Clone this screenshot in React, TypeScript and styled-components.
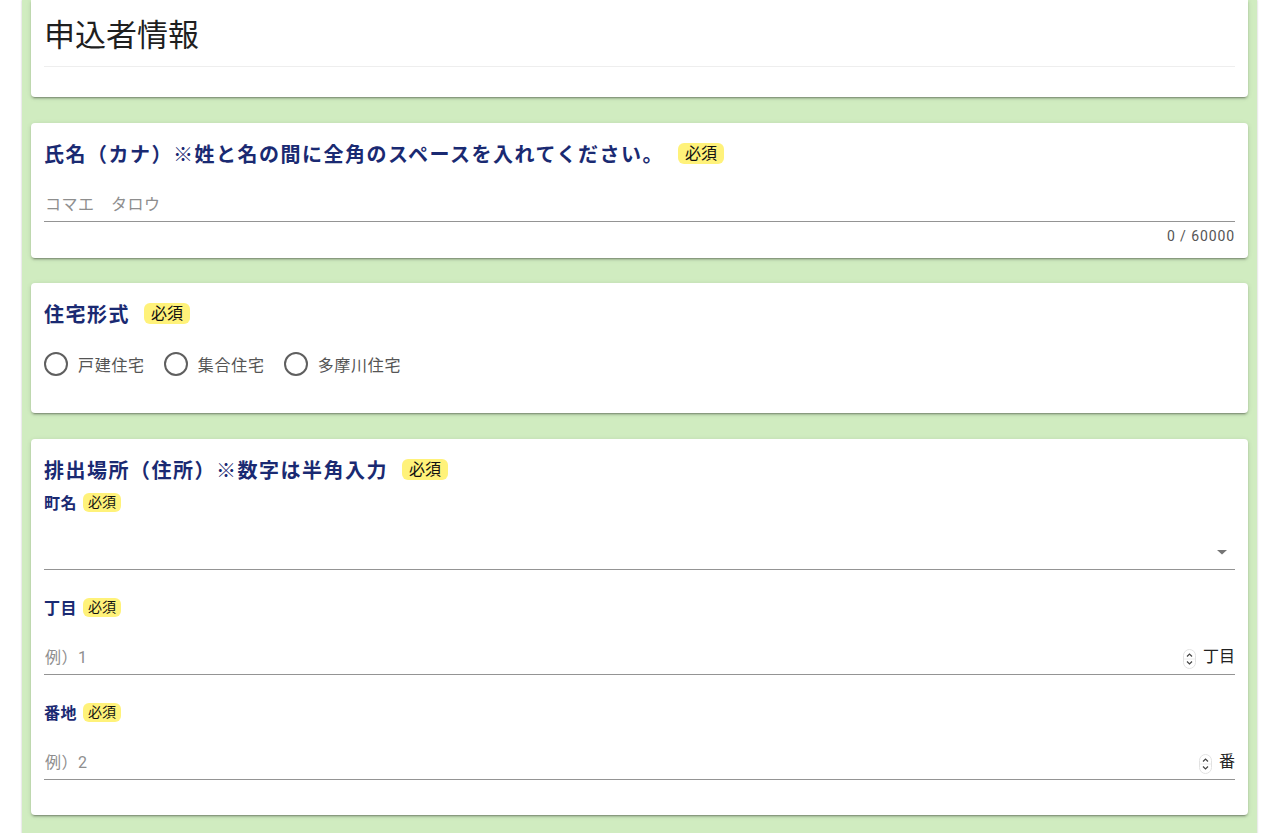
import React from 'react';
import styled, { createGlobalStyle } from 'styled-components';

const GlobalStyle = createGlobalStyle`
  html, body {
    margin: 0;
    padding: 0;
    background: #ffffff;
  }
  body {
    font-family: Roboto, "Noto Sans CJK JP", sans-serif;
    color: #212121;
  }
  * {
    box-sizing: border-box;
  }
`;

const Page = styled.div`
  width: 1235px;
  min-height: 100vh;
  margin-left: 22px;
  padding: 0 9px 40px;
  background: #d0ecc0;
  box-shadow: 0 0 2px rgba(0, 0, 0, 0.25);

  display: flex;
  flex-direction: column;
  row-gap: 25px;
`;

const Card = styled.section<{ $top?: boolean; $mt?: number }>`
  background: #ffffff;
  border-radius: ${(p) => (p.$top ? '0 0 4px 4px' : '4px')};
  box-shadow: 0 3px 1px -2px rgba(0, 0, 0, 0.2), 0 2px 2px 0 rgba(0, 0, 0, 0.14),
    0 1px 5px 0 rgba(0, 0, 0, 0.12);
  padding: 15px 13px 0;
  margin-top: ${(p) => p.$mt ?? 0}px;
`;

const HeaderCard = styled(Card)`
  padding: 16px 13px 30px;
`;

const PageTitle = styled.h1`
  margin: 0 0 10px;
  font-size: 31px;
  line-height: 40px;
  font-weight: 400;
  color: #1f1f1f;
`;

const Divider = styled.hr`
  margin: 0;
  border: none;
  border-top: 1px solid #eeeeee;
`;

const QuestionTitle = styled.div`
  display: flex;
  align-items: center;
  height: 30px;
  font-size: 20px;
  font-weight: 700;
  letter-spacing: 1.5px;
  color: #1a2a72;
`;

const SubLabel = styled.div<{ $gap: number }>`
  display: flex;
  align-items: center;
  height: 20px;
  margin-top: ${(p) => p.$gap}px;
  font-size: 16px;
  font-weight: 700;
  letter-spacing: 0.5px;
  color: #1a2a72;
`;

const Badge = styled.span<{ $small?: boolean }>`
  display: inline-block;
  margin-left: ${(p) => (p.$small ? '6px' : '14px')};
  padding: 0 ${(p) => (p.$small ? '5px' : '7px')};
  height: ${(p) => (p.$small ? '19px' : '21px')};
  line-height: ${(p) => (p.$small ? '19px' : '21px')};
  font-size: ${(p) => (p.$small ? '14px' : '16px')};
  font-weight: 400;
  letter-spacing: 0;
  color: #111111;
  background: #fff27a;
  border-radius: 6px;
`;

const TextField = styled.div<{ $height: number; $top: number }>`
  display: flex;
  align-items: flex-end;
  height: ${(p) => p.$height}px;
  margin-top: ${(p) => p.$top}px;
  padding-bottom: 5px;
  border-bottom: 1px solid #949494;
`;

const Input = styled.input`
  flex: 1;
  height: 24px;
  border: none;
  outline: none;
  padding: 0 0 0 1px;
  background: transparent;
  font-family: Roboto, "Noto Sans CJK JP", sans-serif;
  font-size: 16px;
  letter-spacing: 0.5px;
  color: #212121;

  &::placeholder {
    color: #8e8e8e;
  }
`;

const Suffix = styled.span`
  height: 24px;
  line-height: 24px;
  margin-left: 7px;
  font-size: 16px;
  color: #222222;
`;

const Counter = styled.div`
  margin-top: 7px;
  height: 14px;
  line-height: 14px;
  text-align: right;
  font-size: 14px;
  letter-spacing: 0.9px;
  color: #555555;
  margin-bottom: 15px;
`;

const RadioGroup = styled.div`
  display: flex;
  align-items: center;
  height: 24px;
  margin-top: 24px;
  margin-bottom: 37px;
`;

const RadioItem = styled.label`
  display: flex;
  align-items: center;
  margin-right: 19px;
  font-size: 16px;
  letter-spacing: 0.7px;
  color: #555555;
`;

const RadioIcon = styled.span`
  width: 24px;
  height: 24px;
  display: flex;
  align-items: center;
  justify-content: center;
  margin-right: 10px;

  &::before {
    content: '';
    width: 20px;
    height: 20px;
    border-radius: 50%;
    border: 2px solid #5f5f5f;
  }
`;

const CardBody = styled.div`
  padding-bottom: 35px;
`;

function Spinner() {
  return (
    <svg width="13" height="20" viewBox="0 0 13 20">
      <rect x="0.5" y="0.5" width="12" height="19" rx="6" fill="#fff" stroke="#e2e2e2" />
      <line x1="1" y1="10" x2="12" y2="10" stroke="#ececec" />
      <path d="M4 7.5 L6.5 5 L9 7.5" fill="none" stroke="#444" strokeWidth="1.2" />
      <path d="M4 12.5 L6.5 15 L9 12.5" fill="none" stroke="#444" strokeWidth="1.2" />
    </svg>
  );
}

function DropArrow() {
  return (
    <svg width="24" height="24" viewBox="0 0 24 24" style={{ marginRight: 1 }}>
      <path d="M7 10 L17 10 L12 14.5 Z" fill="#757575" />
    </svg>
  );
}

const radios = ['戸建住宅', '集合住宅', '多摩川住宅'];

function App() {
  return (
    <>
      <GlobalStyle />
      <Page>
        <HeaderCard $top>
          <PageTitle>申込者情報</PageTitle>
          <Divider />
        </HeaderCard>

        <Card $mt={1}>
          <QuestionTitle>
            氏名（カナ）※姓と名の間に全角のスペースを入れてください。
            <Badge>必須</Badge>
          </QuestionTitle>
          <TextField $height={34} $top={20}>
            <Input type="text" placeholder="コマエ　タロウ" />
          </TextField>
          <Counter>0 / 60000</Counter>
        </Card>

        <Card>
          <QuestionTitle>
            住宅形式
            <Badge>必須</Badge>
          </QuestionTitle>
          <RadioGroup>
            {radios.map((r) => (
              <RadioItem key={r}>
                <RadioIcon />
                {r}
              </RadioItem>
            ))}
          </RadioGroup>
        </Card>

        <Card $mt={1}>
          <CardBody>
            <QuestionTitle>
              排出場所（住所）※数字は半角入力
              <Badge>必須</Badge>
            </QuestionTitle>
            <SubLabel $gap={8}>
              町名
              <Badge $small>必須</Badge>
            </SubLabel>
            <TextField $height={58} $top={0}>
              <Input type="text" readOnly />
              <DropArrow />
            </TextField>

            <SubLabel $gap={27}>
              丁目
              <Badge $small>必須</Badge>
            </SubLabel>
            <TextField $height={58} $top={0}>
              <Input type="text" placeholder="例）1" />
              <Spinner />
              <Suffix>丁目</Suffix>
            </TextField>

            <SubLabel $gap={27}>
              番地
              <Badge $small>必須</Badge>
            </SubLabel>
            <TextField $height={58} $top={0}>
              <Input type="text" placeholder="例）2" />
              <Spinner />
              <Suffix>番</Suffix>
            </TextField>
          </CardBody>
        </Card>
      </Page>
    </>
  );
}

export default App;
